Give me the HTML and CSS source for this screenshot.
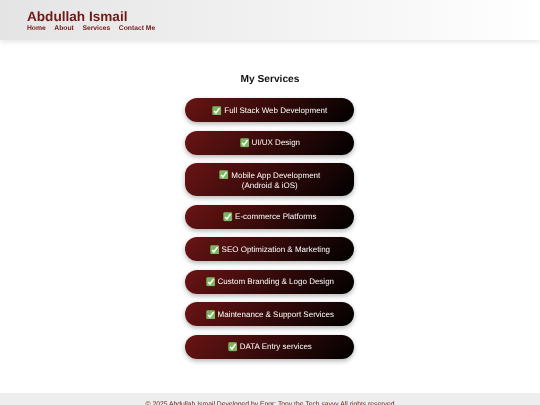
FILE: index.html
```html
<!DOCTYPE html>
<html lang="en">
<head>
<meta charset="utf-8">
<title>Abdullah Ismail</title>
<link rel="stylesheet" href="styles.css">
</head>
<body>
<svg class="defs" width="0" height="0" aria-hidden="true">
  <symbol id="check" viewBox="0 0 16 16">
    <rect x="0.5" y="0.5" width="15" height="15" rx="2.5" fill="#7bb661"/>
    <path d="M3.5 8.3 6.7 11.8 12.6 3.6" fill="none" stroke="#fff" stroke-width="2.6"/>
  </symbol>
</svg>
<header class="site-header">
  <h1 class="site-title">Abdullah Ismail</h1>
  <nav class="site-nav">
    <a href="#">Home</a>
    <a href="#">About</a>
    <a href="#">Services</a>
    <a href="#">Contact Me</a>
  </nav>
</header>
<main class="services">
  <h2 class="services-title">My Services</h2>
  <ul class="service-list">
    <li class="service"><svg class="check"><use href="#check"/></svg>Full Stack Web Development</li>
    <li class="service"><svg class="check"><use href="#check"/></svg>UI/UX Design</li>
    <li class="service"><span><svg class="check"><use href="#check"/></svg>Mobile App Development<br>(Android &amp; iOS)</span></li>
    <li class="service"><svg class="check"><use href="#check"/></svg>E-commerce Platforms</li>
    <li class="service"><svg class="check"><use href="#check"/></svg>SEO Optimization &amp; Marketing</li>
    <li class="service"><svg class="check"><use href="#check"/></svg>Custom Branding &amp; Logo Design</li>
    <li class="service"><svg class="check"><use href="#check"/></svg>Maintenance &amp; Support Services</li>
    <li class="service"><svg class="check"><use href="#check"/></svg>DATA Entry services</li>
  </ul>
</main>
<footer class="site-footer">© 2025 Abdullah Ismail Developed by Engr: Tony the Tech savvy All rights reserved</footer>
</body>
</html>
```
FILE: styles.css
```css
* { box-sizing: border-box; }
html, body { margin: 0; height: 405px; overflow: hidden; }
body {
  display: flex;
  flex-direction: column;
  background: #fff;
  font-family: "Liberation Sans", Arial, sans-serif;
  text-rendering: geometricPrecision;
  filter: blur(0.35px);
}
.defs { position: absolute; }
.site-header {
  height: 40px;
  padding: 8.5px 27px 0;
  background: linear-gradient(90deg, #e4e4e4 0%, #ffffff 100%);
  box-shadow: 0 2px 5px rgba(0, 0, 0, 0.1);
}
.site-title {
  margin: 0 0 0.5px;
  font-size: 13.6px;
  line-height: 15px;
  font-weight: 700;
  color: #701818;
}
.site-nav {
  display: flex;
  gap: 8.6px;
}
.site-nav a {
  font-size: 6.75px;
  line-height: 9px;
  font-weight: 700;
  color: #701818;
  text-decoration: none;
}
.services {
  flex: 1;
  display: flex;
  flex-direction: column;
  align-items: center;
  padding-top: 33px;
}
.services-title {
  margin: 0 0 11px;
  font-size: 10.2px;
  line-height: 14px;
  font-weight: 700;
  color: #111;
}
.service-list {
  display: flex;
  flex-direction: column;
  gap: 8.5px;
  width: 169px;
  margin: 0 0.4px 0 0;
  padding: 0;
  list-style: none;
}
.service {
  display: flex;
  align-items: center;
  justify-content: center;
  min-height: 24px;
  padding: 5px 8px 4px;
  border-radius: 12px;
  background: linear-gradient(135deg, #6b1414 0%, #000 100%);
  box-shadow: 0 2px 5px rgba(0, 0, 0, 0.3);
  color: #fff;
  font-size: 8px;
  line-height: 10px;
  text-align: center;
}
.service:nth-child(3) { min-height: 33px; }
.check {
  width: 9.5px;
  height: 9.5px;
  margin-right: 2.5px;
  vertical-align: -1.5px;
  flex: none;
}
.site-footer {
  height: 12px;
  padding-top: 8px;
  background: #eee;
  color: #701818;
  font-size: 6.78px;
  line-height: 8px;
  text-align: center;
  white-space: nowrap;
  overflow: hidden;
}
```
